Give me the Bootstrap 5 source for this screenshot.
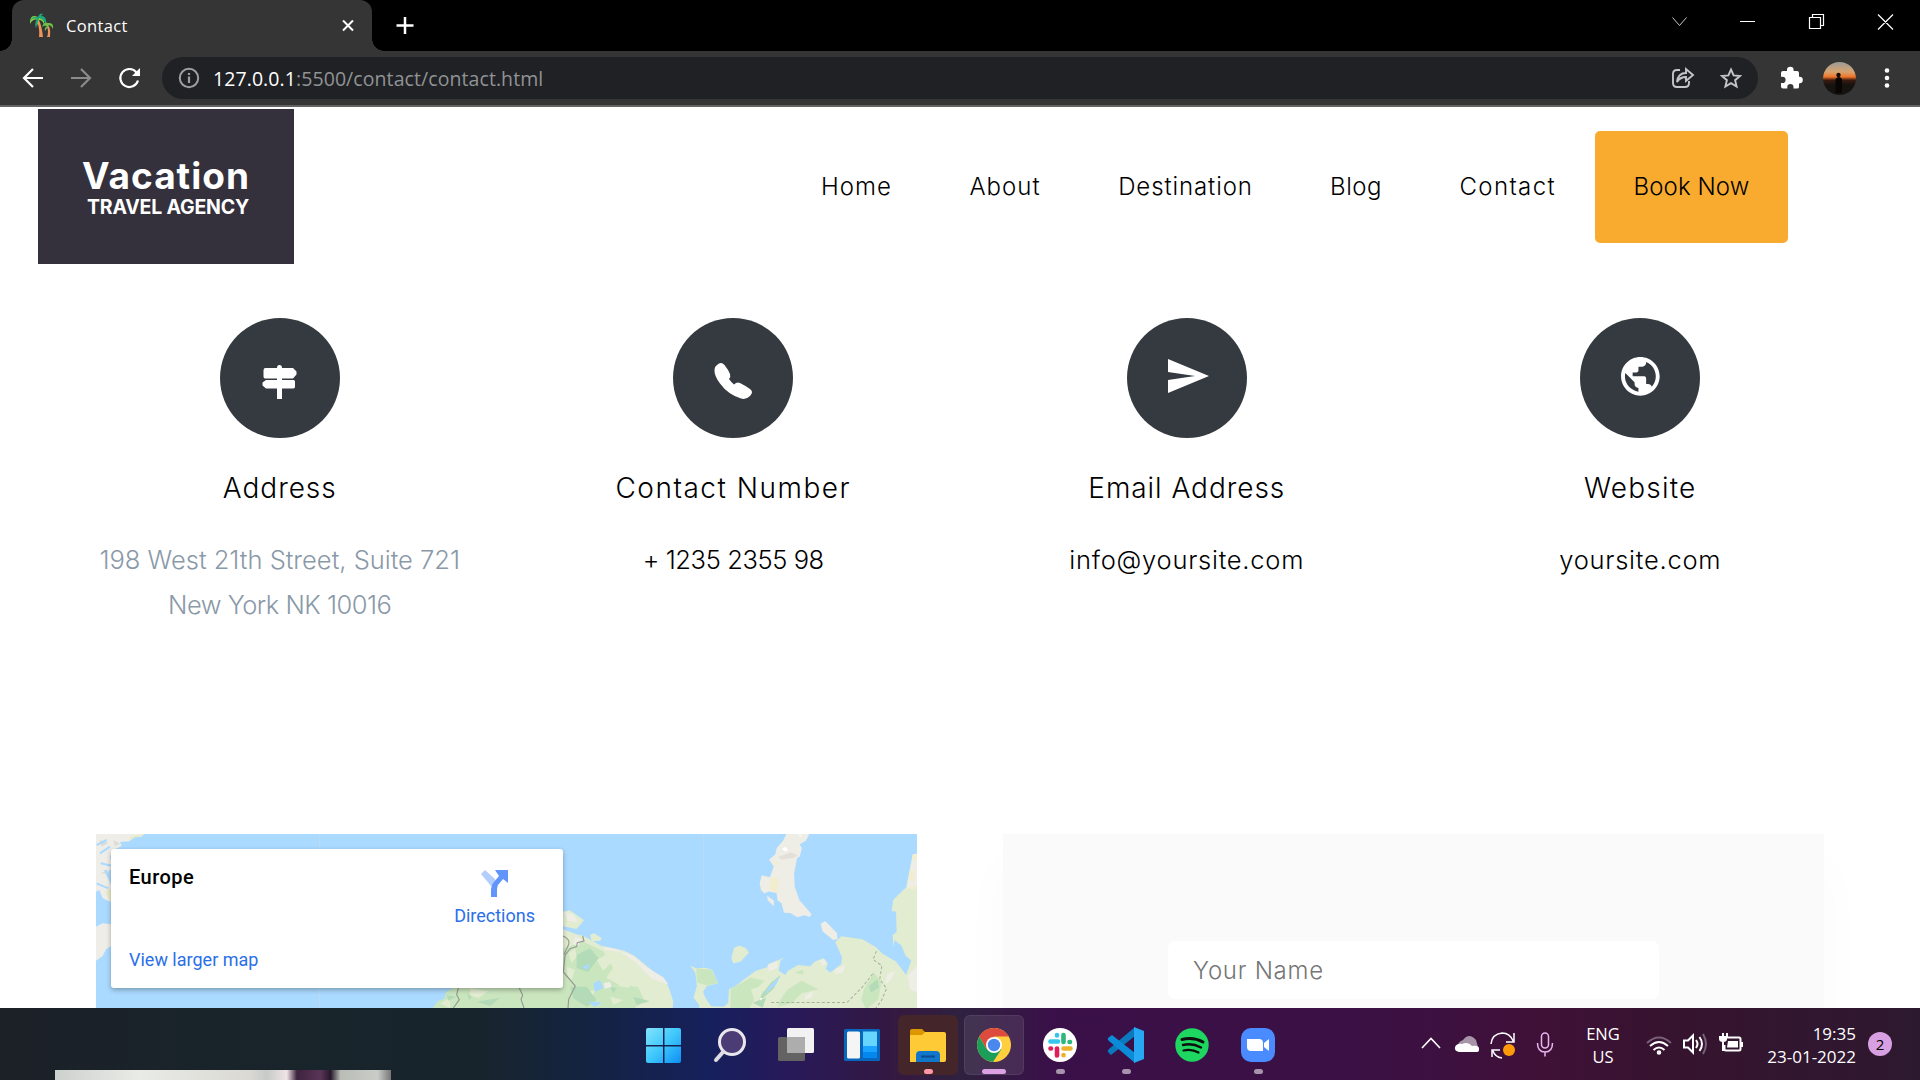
<!DOCTYPE html>
<html lang="en">
<head>
<meta charset="utf-8">
<title>Contact</title>
<link href="https://cdn.jsdelivr.net/npm/bootstrap@5.3.0/dist/css/bootstrap.min.css" rel="stylesheet">
<style>
body{width:1920px;height:1080px;overflow:hidden;background:#fff;color:#000;font-family:"Inter","Open Sans",sans-serif}
svg{display:block;flex:none}
.ui{font-family:"Open Sans","Noto Sans",sans-serif}
.titlebar{height:51px;background:#000;padding-left:12px}
.tab{width:360px;height:51px;background:#353535;border-radius:12px 12px 0 0;padding:0 18px;position:relative;color:#fff;font-size:16.5px;letter-spacing:.35px}
.tab span{margin:2px 0 0 12px}
.tab:before,.tab:after{content:"";position:absolute;bottom:0;width:12px;height:12px}
.tab:before{left:-12px;background:radial-gradient(circle at 0 0,transparent 11.5px,#353535 12px)}
.tab:after{right:-12px;background:radial-gradient(circle at 100% 0,transparent 11.5px,#353535 12px)}
.toolbar{height:56px;background:#353535;border-bottom:2px solid #636363;padding-left:21px}
.omni{width:1596px;height:42px;border-radius:21px;background:#202124;margin-left:21px;padding:0 14px 0 16px;color:#909396;font-size:19.5px;letter-spacing:.08px}
.omni>span{margin:2px 0 0 13px}
.site{height:901px;overflow:hidden}
.brandbox{width:256px;height:155px;background:#34313c;color:#fff;margin:2px 0 0 38px;padding-top:46px;text-align:center}
.brandbox b{display:block;font-size:37px;line-height:42px;font-weight:700;letter-spacing:1px}
.brandbox strong{display:block;font-size:19.5px;line-height:20px;font-weight:700;padding-left:4px;letter-spacing:-.2px}
.menu{margin:24px 132px 0 0}
.menu a{font-size:24px;line-height:112px;height:112px;color:#000;font-weight:350;white-space:nowrap;text-align:center;letter-spacing:1px}
.menu .home{width:148px}.menu .about{width:149px}.menu .dest{width:212px;letter-spacing:.9px}.menu .blog{width:129px;letter-spacing:.5px}.menu .contact{width:174.5px;letter-spacing:1.4px}
.menu .book{width:193px;background:#f9ab30;border-radius:5px;letter-spacing:.1px}
.infos{width:1814px;margin:54px 0 0 53px;height:516px}
.disc{width:120px;height:120px;border-radius:50%;background:#343a40}
.infos h3{font-size:28px;line-height:40px;font-weight:350;margin:30px 0 29px;letter-spacing:.95px}
.infos .wide{letter-spacing:1.5px}
.infos .mid{letter-spacing:1.2px}
.infos p{font-size:25.5px;line-height:45px;font-weight:350;margin:0;letter-spacing:.75px}
.infos .nums{letter-spacing:-.4px}
.infos .gr{color:#8a99a8;letter-spacing:0}
.infos .gr2{letter-spacing:-.5px}
.pair{margin-left:96px;gap:86px}
.mapbox{width:821px;height:180px;background:#aadaff;position:relative;font-family:Roboto,sans-serif}
.placecard{position:absolute;left:15px;top:15px;width:452px;height:139px;background:#fff;border-radius:3px;box-shadow:0 2px 5px rgba(0,0,0,.3);padding:17px 19px 17px 18px}
.placecard .lnk{color:#2a6fe8;font-size:18px;line-height:22px}
.placename{font-size:20px;line-height:22px;font-weight:500;letter-spacing:.45px}
.route{margin:4px 9px 0 0}
.formbox{width:821px;height:300px;background:#fafafa;box-shadow:0 30px 50px rgba(0,0,0,.025);padding-top:107px}
.formbox input{width:491px;height:58px;border:0;border-radius:7px;padding:0 25px;font-size:24px;font-weight:350;letter-spacing:.75px}
.formbox input::placeholder{color:#757575;opacity:1}
.scroller{width:21px;height:213px;background:#ccc;margin:220px 2px 0 0}
.taskbar{height:72px;position:relative;color:#fff;background:linear-gradient(90deg,#1c2027 0,#19242a 10%,#18242c 25%,#14233f 30%,#16205c 37%,#27195a 41%,#35193f 47%,#2f213f 50%,#3a1049 55%,#3b1043 72%,#3f1138 80%,#36132f 87%,#2d192f 100%)}
.apps{padding:2px 0 0 634px;gap:6px}
.slot{width:60px;height:60px;border-radius:6px;position:relative}
.slot.on{background:rgba(255,255,255,.09);box-shadow:inset 0 0 0 1px rgba(255,255,255,.07)}
.slot.hot{background:#44252a}
.slot i{position:absolute;bottom:1px;left:50%;width:9px;margin-left:-4.5px;height:5px;border-radius:3px;background:#a893ac}
.slot.hot i{background:#ff98a4}.slot.on i{width:24px;margin-left:-12px;background:#dba1e2}
.cam{position:absolute;left:55px;top:62px;width:336px;height:10px;background:linear-gradient(90deg,#cdd1cd 0,#e9ebe6 25%,#dad9d3 58%,#c6cbc8 63%,#efe4e5 69%,#3d233e 72%,#5a3457 79%,#27192c 82%,#babdb6 85%,#c9cdc8 96%,#777 100%)}
.tray{position:absolute;right:0;top:0;width:500px;height:72px}
.tray .lang{font-size:16.5px;line-height:23px;margin-left:31px;width:36px;padding-top:1px}
.tray .clock{font-size:17px;line-height:23px;width:94px;margin-left:18px;white-space:nowrap;padding-top:1px}
.note{width:24px;height:24px;border-radius:50%;background:#d99fe3;color:#000;font-size:15px;line-height:24px;margin-left:12px}
</style>
</head>
<body class="d-flex flex-column">
<header class="titlebar ui d-flex align-items-center flex-shrink-0">
  <div class="tab d-flex align-items-center">
    <svg width="24" height="25" viewBox="0 0 24 25"><path d="M7 8q3 8 2 16h4Q12 14 9 7zM17 14q2 5 0 10h3q1-6-1-11z" fill="#e9955b"/><path d="M0 8q1-7 8-4 8-2 6 8-1-5-5-5l-2 6q-1-4 1-6-5-2-8 4z" fill="#8bd13f"/><path d="M8 4q2-5 5-3l-2 2q6 0 5 8-3-5-7-6l-3 10q-2-5 1-9-4-2-7 2 2-5 8-4z" fill="#1fa57c"/><path d="M12 14q2-6 6-4 6-1 5 6-1-3-4-4l-4 6q-1-3 2-5-3-1-5 1z" fill="#6dc04b"/></svg>
    <span>Contact</span>
    <svg class="ms-auto" width="12" height="13" viewBox="0 0 12 13"><path d="M1 1.500l10 10M11 1.500l-10 10" stroke="#fff" stroke-width="2"/></svg>
  </div>
  <svg style="margin-left:24px" width="19" height="51" viewBox="0 0 19 51"><path d="M9 17v17M.5 25.500h17" stroke="#fff" stroke-width="2.500"/></svg>
  <svg class="ms-auto" width="248" height="51" viewBox="1672 0 248 51" fill="none" stroke="#fff" stroke-width="1.200"><path d="M1672.500 17.500l7 8 7-8" stroke="#c8c8c8" stroke-width="1"/><path d="M1740 21.500h15M1812.500 17v-2.500h11v11h-3M1809.500 17.500h11v11h-11zM1878 14.500l15 15M1893 14.500l-15 15"/></svg>
</header>
<div class="toolbar ui d-flex align-items-center flex-shrink-0">
  <svg width="120" height="24" viewBox="21 66 120 24" fill="none" stroke="#fff" stroke-width="2.200"><path d="M43 78H24.500M33 69l-9 9 9 9"/><path d="M71 78h18.500M81 69l9 9-9 9" stroke="#8b8b8b"/><path d="M136.500 72.500a9 9 0 1 0 1.500 8"/><path d="M140 68v8h-8z" fill="#fff" stroke="none"/></svg>
  <div class="omni d-flex align-items-center">
    <svg width="22" height="22" viewBox="0 0 22 22"><circle cx="11" cy="11" r="9.200" fill="none" stroke="#9aa0a6" stroke-width="2"/><path d="M11 9.500V16M11 6v2" stroke="#9aa0a6" stroke-width="2.200"/></svg>
    <span><span class="text-white">127.0.0.1</span>:5500/contact/contact.html</span>
    <svg class="ms-auto" width="72" height="24" viewBox="1672 66 72 24" fill="none" stroke="#c4c5c6" stroke-width="1.900"><path d="M1680 70h-3q-4 0-4 4v9q0 4 4 4h8q4 0 4-4v-2M1677 82q1-9 9-9v-4l7 6-7 6v-4q-6 0-9 5z"/><path d="M1731 69.500l2.600 5.900 6.400.6-4.900 4.200 1.500 6.300-5.600-3.400-5.600 3.400 1.500-6.300-4.900-4.200 6.400-.6z"/></svg>
  </div>
  <svg style="margin-left:22px" width="140" height="36" viewBox="1780 60 140 36"><defs><linearGradient id="sky" x2="0" y2="1"><stop stop-color="#9b9a98"/><stop offset=".3" stop-color="#d8a36e"/><stop offset=".45" stop-color="#f0742a"/><stop offset=".55" stop-color="#3a1a10"/><stop offset=".7" stop-color="#15120f"/></linearGradient></defs><path d="M1783 71h4v-1a3.300 3.300 0 0 1 6.600 0v1h3.400q2 0 2 2v3.800h.5a3.300 3.300 0 0 1 0 6.600h-.5V87q0 1.500-2 1.500h-3.500V87a3.100 3.100 0 0 0-6.200 0v1.500H1783q-2 0-2-2V83h1.500a3.100 3.100 0 0 0 0-6.200H1781V73q0-2 2-2z" fill="#fff"/><circle cx="1839.500" cy="78.500" r="16.500" fill="url(#sky)"/><circle cx="1838.500" cy="75" r="2.200" fill="#120c08"/><path d="M1835.500 93v-14q3.500-4 6.500 0v14z" fill="#080605"/><g fill="#fff"><circle cx="1887" cy="70.500" r="2.300"/><circle cx="1887" cy="78" r="2.300"/><circle cx="1887" cy="85.500" r="2.300"/></g></svg>
</div>
<main class="site d-flex flex-shrink-0">
  <div class="flex-grow-1">
    <nav class="d-flex justify-content-between align-items-start vw-100">
      <div class="brandbox"><b>Vacation</b><strong>TRAVEL AGENCY</strong></div>
      <div class="menu d-flex">
        <a class="text-decoration-none home">Home</a><a class="text-decoration-none about">About</a><a class="text-decoration-none dest">Destination</a><a class="text-decoration-none blog">Blog</a><a class="text-decoration-none contact">Contact</a><a class="book text-decoration-none">Book Now</a>
      </div>
    </nav>
    <section class="infos row g-0 text-center align-content-start">
      <div class="col-3 d-flex flex-column align-items-center">
        <div class="disc"><svg width="120" height="120" viewBox="220 317 120 120" fill="#fff"><path d="M277 398v-13h5v13zM277 367q0-3 2.500-3t2.500 3h11l3.500 3.500v3l-3.500 4h-11v1.500h11.500q1.500 0 1.500 1.500v5q0 2-1.500 2H266l-3.500-3v-3l3.500-2.500h11V377.500h-12q-1.500 0-1.500-2v-6q0-2.500 1.500-2.500z"/></svg></div>
        <h3>Address</h3><p class="gr">198 West 21th Street, Suite 721</p><p class="gr gr2">New York NK 10016</p></div>
      <div class="col-3 d-flex flex-column align-items-center">
        <div class="disc"><svg width="120" height="120" viewBox="673 318 120 120" fill="#fff"><path d="M717 365q4-4 7.500 0 4 5 5.500 9 1 3-1 5 2 3 5 5.500 3-3 6-1.500 6 3 10 6 4 3 0 7-4 4-9 2.500-13-4-21-15-6-8-5.500-14 0-3 2.500-4.500z"/></svg></div>
        <h3 class="wide">Contact Number</h3><p class="nums">+ 1235 2355 98</p></div>
      <div class="col-3 d-flex flex-column align-items-center">
        <div class="disc"><svg width="120" height="120" viewBox="1126 318 120 120" fill="#fff"><path d="M1167 359l41 17-41 17v-13l27-4-27-4z"/></svg></div>
        <h3>Email Address</h3><p>info@yoursite.com</p></div>
      <div class="col-3 d-flex flex-column align-items-center">
        <div class="disc"><svg width="120" height="120" viewBox="0 0 120 120"><g transform="translate(37.200 35.200) scale(1.930)" fill="#fff"><path d="M12 2C6.480 2 2 6.480 2 12s4.480 10 10 10 10-4.480 10-10S17.520 2 12 2zm-1 17.930c-3.950-.49-7-3.850-7-7.930 0-.62.080-1.210.210-1.790L9 15v1c0 1.100.9 2 2 2v1.930zm6.900-2.540c-.26-.81-1-1.390-1.900-1.390h-1v-3c0-.55-.45-1-1-1H8v-2h2c.55 0 1-.45 1-1V7h2c1.100 0 2-.9 2-2v-.41c2.930 1.190 5 4.060 5 7.410 0 2.080-.8 3.970-2.100 5.390z"/></g></svg></div>
        <h3 class="mid">Website</h3><p>yoursite.com</p></div>
    </section>
    <section class="pair d-flex">
      <div class="mapbox">
        <svg width="821" height="174" viewBox="0 0 821 174">
          <path d="M223.500 0v174M607.500 0v174" stroke="#b7dcf7" stroke-width="1"/>
          <g transform="translate(-16 -14) scale(.33333)">
            <path d="M48 42h145l-10 8-20 2-15 12-28 2 5 12-25 12-10 20 10 30-20 20 15 40-5 45-22-10-10-25-10 5zM48 320l20-10 25 3v65l-15 10-10 20-20 14z" fill="#eeede8"/>
            <path d="M150 50l43-8-10 8-20 2-15 12zM75 215l18-10v40z" fill="#e8ebc8"/>
            <path d="M60 60l25 8-20 12zM62 160l20-10 5 12zM100 60l20 12-15 6z" fill="#dcdcd6"/>
            <path d="M60 100l30-20M62 130l35 8M62 235l15 15M75 150l20 40M50 75l30-15M50 190l35 15M48 290l40-10" stroke="#aadaff" stroke-width="6"/>
            <path d="M1058 564l15-20 20-8 5-20 40-22 310-10v-60h60v140z" fill="#cae6bf"/>
            <path d="M1170 504l55 10-30 20-25-8zM1080 550l30-16v30zM1260 530l60 20-50 10zM1370 510l50 0-10 30z" fill="#e2ecd0"/>
            <path d="M1100 525l30 5-25 12zM1190 545l70-12-30 25zM1160 520l16 10-8 10z" fill="#b4dbb8"/>
            <path d="M1135 504l-5 20 8 15-18 25M1318 504l10 22-5 12 7 26M1485 504l-20 45 4 15" fill="none" stroke="#969b91" stroke-width="3.500"/>
          </g>
          <g transform="translate(404 -14) scale(.33333)">
            <path d="M189 275l20-4 43 30-22 26-41-8zM189 328l40 15 22 5 54 30 22 4 46 10 30 15 60 50 35 30 10 20 12 38-3 28H0V500h189zM270 345l12-5 23 14-4 8-25 2z" fill="#e2ecd0"/>
            <path d="M189 385l60-20 60 28 30 50-20 30 35 20 60 8 20 43-30 20H0V504h189z" fill="#cae6bf"/>
            <path d="M205 400l20-15 5 25-15 20zM290 420l30-18 15 25-25 25zM360 480l40 8-15 15-30-5zM250 520l35-10-10 25zM200 440l25 10-10 30-12-10zM330 530l40 10-30 14z" fill="#e2ecd0"/>
            <path d="M230 405l40-20 25 30-30 40-35-10zM210 500l50 0 30 40-30 20-40-25zM400 530l50 14-40 10zM330 500l20 5-10 15z" fill="#b4dbb8"/>
            <path d="M245 440l25-8-8 18zM280 490l20-10 10 24-25 12zM265 545l40 2-20 14z" fill="#aadaff"/>
            <path d="M310 382l35 4 55 22 40 34 50 30 16 22-50-18-50-50-45-30-45-6zM195 275l28 10 10 22-30-4zM310 490l20-5 5 15-20 6zM225 350l20 8-10 20-15-5z" fill="#eeede6"/>
            <path d="M189 348q25 10 15 30l-12 25M248 348l4 15-20 5-2 12-20 6-15 20-5 50 36 42-20 40-2 27M58 504l10 22-5 12 9 26" fill="none" stroke="#969b91" stroke-width="3.500"/>
          </g>
          <g transform="translate(584 0) scale(.3375)">
            <path d="M30 390l18 8 27-2 20 6 18 40-33 8-12 18 7 17 17 25 38 2 13-12 2-40 20-10 25-20 35-25 33-10 4-10 48-19-12 9-6 30 20 13 8-13 30-17 35 4 15-14 25-10 13 14-6 18 13 10 33-25 2-20-20-45 18-17 62 9 40 23 20 20 40 23 30 40 15-43-17-15-12-30-20-15-4 20-2-35 12-10-2-60-13-2 5-33 38-37 20-98 21-2v470H58l-2-23-16-20 10-35-5-40zM175 330l20 8 9 14-24 26-22 6-6-16 8-30z" fill="#e2ecd0"/>
            <path d="M48 398l45 4 20 40-33 6-30-8zM150 460l60-35 40 10-20 20-20 5 10 30-20 38h-50zM320 460l40-25 50 25-50 12-30 30-40 10 10-25zM545 460l30-50 22 30-10 50-35 30-15-30zM340 410l25-8 0 15z" fill="#cae6bf"/>
            <path d="M270 440l28-22-20 40-45 40 10-25zM560 450l25-20 5 25-25 15zM215 500l40-15-10 30z" fill="#b4dbb8"/>
            <path d="M265 450l32-30-12 25-35 32z" fill="#aadaff"/>
            <path d="M315 0h68l-10 20-18 10 6 12-6 25-8 4-9 45 2 40 14 40 24 28 12 14-5 8-17-5-20 6-22-13-18-1-7-28-12-8-3-22-24-5-12 6-10-10-4-20 6-24 24 6 12-32-14-20 18-15 5-20 18-20zM258 182l20 15v17l-18-18zM430 258l35 35 2 18-13 3-32-26-5-22z" fill="#eeede6"/>
            <path d="M260 388l30-12-2 20-25 12zM412 375l15-5 8 14-12 8zM460 400l30-12-8 22-25 5zM615 415l22-10-10 25-20 15zM675 420l36-40v95l-30-15zM370 480l25-14-5 18-20 8zM690 60l21-2v95l-40 10z" fill="#eeede6"/>
            <path d="M270 128l24 4-6 42-24-10zM275 86l20-6-8 14zM690 60h21v18h-22zM680 112l18-6-6 34-14-4zM672 160l35-10-15 15z" fill="#f3edcf"/>
            <path d="M290 68l40-14 18 8-10 8-38 6z" fill="#e2e0d8"/><path d="M302 44l12-6 6 10-10 4zM355 0l6 8-8-3zM236 486l8 0-4 8z" fill="#fff"/>
            <path d="M270 499h225l45-45 35-45M582 347l-10 25 26 18-6 40 20 28-15 35-22 30" fill="none" stroke="#a5b49b" stroke-width="3" stroke-dasharray="9 6"/>
          </g>
        </svg>
        <div class="placecard d-flex justify-content-between">
          <div class="d-flex flex-column justify-content-between"><span class="placename">Europe</span><span class="lnk">View larger map</span></div>
          <div class="route"><svg class="mx-auto" width="28" height="28" viewBox="0 0 28 28"><path d="M0 4l4-4 10 9 1 5-5 2z" fill="#b3cdfd"/><path d="M14 0h13v13l-5-4-5 6q-1 2-1 5v7h-6v-8q0-4 3-7l5-6z" fill="#6295fa"/></svg><span class="lnk d-block mt-2 pt-0" style="margin-top:7px!important">Directions</span></div>
        </div>
      </div>
      <div class="formbox text-center"><input placeholder="Your Name"></div>
    </section>
  </div>
  <div class="scroller flex-shrink-0"></div>
</main>
<footer class="taskbar ui flex-shrink-0">
  <div class="apps d-flex align-items-center h-100">
    <div class="slot"><svg width="60" height="60"><defs><linearGradient id="win" x2="1" y2="1"><stop stop-color="#83e3fb"/><stop offset=".5" stop-color="#3fc8fb"/><stop offset="1" stop-color="#0c8ff6"/></linearGradient></defs><path d="M12 15q0-2 2-2h15v17H12zM30.500 13H45q2 0 2 2v15H30.500zM12 31.500h17V48H14q-2 0-2-2zM30.500 31.500H47V46q0 2-2 2H30.500z" fill="url(#win)"/></svg></div>
    <div class="slot"><svg width="60" height="60"><circle cx="32" cy="27" r="12.500" fill="#4b3c75" stroke="#e9e7ed" stroke-width="3"/><path d="M23 37l-7 8" stroke="#dedce2" stroke-width="4" stroke-linecap="round"/></svg></div>
    <div class="slot"><svg width="60" height="60"><rect x="21" y="13" width="27" height="25" rx="1.500" fill="#f2f2f2"/><rect x="12" y="22" width="27" height="24" rx="1.500" fill="#636363"/><path d="M21 22h16q2 0 2 2v14H21z" fill="#adadad"/></svg></div>
    <div class="slot"><svg width="60" height="60"><rect x="12" y="14" width="36" height="32" rx="1.500" fill="#0867bd"/><rect x="15" y="16.500" width="13" height="27" rx="1.500" fill="#f5f5f5"/><rect x="31" y="16.500" width="14" height="15" fill="#66d5ff"/><path d="M31 31h14v6H31z" fill="#1aa3ff"/><path d="M31 37h14v6H31z" fill="#0587f0"/></svg></div>
    <div class="slot hot"><svg width="60" height="60"><path d="M12 16q0-2 2-2h10l3 3v6H12z" fill="#dc9700"/><path d="M12 20h12l3-3h19q2 0 2 2v26q0 2-2 2H12z" fill="#fecb37"/><path d="M18 47v-7q0-4 4-4h16q4 0 4 4v7z" fill="#1276cb"/><path d="M23 41.500h14" stroke="#0a4b91" stroke-width="2"/></svg><i></i></div>
    <div class="slot on"><svg width="60" height="60"><circle cx="30" cy="30" r="17" fill="#ffcf3d"/><path d="M15.300 21.500A17 17 0 0 1 44.700 21.500H30L22.600 34.300z" fill="#dd4b3e"/><path d="M15.300 21.500A17 17 0 0 0 29 47L37.400 34.300l-14.800 0z" fill="#1b9e5a"/><circle cx="30" cy="30" r="8" fill="#fff"/><circle cx="30" cy="30" r="6.200" fill="#4a88ee"/></svg><i></i></div>
    <div class="slot"><svg width="60" height="60"><circle cx="30" cy="30" r="17" fill="#fff"/><g stroke-width="4.600" stroke-linecap="round"><path d="M20.500 26.500H28M27 20v.5" stroke="#36c5f0"/><path d="M33.500 20v7M39.500 27h.5" stroke="#2eb67d"/><path d="M33.500 33.500h7M33.500 40v.2" stroke="#ecb22e"/><path d="M27 33.500v7M20.500 33.500h.5" stroke="#e01e5a"/></g></svg><i></i></div>
    <div class="slot"><svg width="60" height="60"><path d="M12 37l3 3 24-19V12L13 34q-2 1.500-1 3z" fill="#0b79bd"/><path d="M12 23l4-3 23 18v10L13 26q-2-1.500-1-3z" fill="#0b8bd8"/><path d="M38 12l10 4v28l-10 4z" fill="#27a8f2"/></svg><i></i></div>
    <div class="slot"><svg width="60" height="60"><circle cx="30" cy="30" r="16.700" fill="#1ed760"/><g fill="none" stroke="#0c0f0d" stroke-linecap="round"><path d="M20 24.500q11-3 21 2.500" stroke-width="3"/><path d="M21 30q9-2.500 18 2.500" stroke-width="2.500"/><path d="M21.500 35.500q8-2 15 2" stroke-width="2.200"/></g></svg></div>
    <div class="slot"><svg width="60" height="60"><rect x="13" y="13" width="34" height="34" rx="10" fill="#4a8cff"/><path d="M19 24h12q4 0 4 4v8H23q-4 0-4-4zM36 28l5-4v12l-5-4z" fill="#fff"/></svg><i></i></div>
  </div>
  <div class="cam"></div>
  <div class="tray d-flex align-items-center">
    <svg width="134" height="72" viewBox="1420 1008 134 72" fill="none"><path d="M1422 1048l9-9.500 9 9.500" stroke="#fff" stroke-width="1.600"/><path d="M1458 1048q-1-6 5-8 6-8 13 0l2 7z" fill="#a894a8"/><path d="M1459 1052q-5-1-4-5 2-4 7-3 6-3 10 2 8-1 7 4 0 2-3 2z" fill="#fff"/><path d="M1491 1044q1-10 11-11 8 0 11.500 8.500M1514 1033v9h-8M1502 1058q-7-1-9-7M1492 1057v-7h8" stroke="#fff" stroke-width="1.500"/><circle cx="1509" cy="1050" r="6" fill="#ff9a08"/><rect x="1541.500" y="1033" width="7" height="15" rx="3.500" stroke="#eab5ef" stroke-width="1.500"/><path d="M1537.500 1043q0 9 7.500 9t7.500-9M1545 1052v4.500" stroke="#eab5ef" stroke-width="1.500"/></svg>
    <div class="lang text-center">ENG<br>US</div>
    <svg style="margin-left:25px" width="98" height="72" viewBox="1646 1008 98 72" fill="none" stroke="#fff" stroke-width="2"><path d="M1647 1043q12-11 24 0" stroke="#79607a"/><path d="M1650 1046q9-8 18 0M1653.500 1050q5.500-5 11 0"/><circle cx="1659" cy="1052.500" r="1.300"/><path d="M1684 1040.500h4l5-5v17l-5-5h-4zM1696 1040q3 4 0 8M1699.500 1037q5 7 0 14"/><path d="M1703 1034q6 10 0 20" stroke="#79607a"/><path d="M1726 1037.500h13q1.500 0 1.500 1.500v10q0 1.500-1.500 1.500h-13q-1.500 0-1.500-1.500v-4M1723 1033v4M1727 1033v4"/><path d="M1719 1036h8v3q0 3-4 3t-4-3zM1722 1041h2v10h-2zM1728 1041h10v6.500h-11zM1741 1042h2v5h-2z" fill="#fff" stroke="none"/></svg>
    <div class="clock text-end">19:35<br>23-01-2022</div>
    <div class="note text-center">2</div>
  </div>
</footer>
<script src="https://cdn.jsdelivr.net/npm/bootstrap@5.3.0/dist/js/bootstrap.bundle.min.js"></script>
</body>
</html>
